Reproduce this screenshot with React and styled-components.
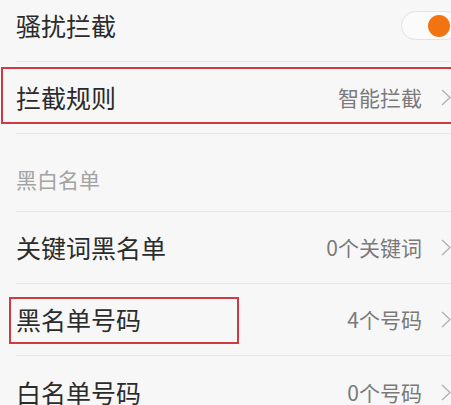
import React from "react";
import styled, { createGlobalStyle } from "styled-components";

const GlobalStyle = createGlobalStyle`
  html, body {
    margin: 0;
    padding: 0;
    background: #f7f7f7;
    overflow: hidden;
  }
  body {
    font-family: "Noto Sans CJK SC", "Noto Sans", sans-serif;
  }
`;

const Screen = styled.div`
  width: 451px;
  height: 405px;
  overflow: hidden;
  background: #f7f7f7;
`;

const List = styled.div`
  display: flex;
  flex-direction: column;
  margin-top: -10px;
`;

const Row = styled.div`
  position: relative;
  height: 72px;
  display: flex;
  align-items: center;
  justify-content: space-between;
  padding-left: 16px;
  box-sizing: border-box;
  border-bottom: ${(p) => (p.$last ? "none" : "1px solid transparent")};

  &::after {
    content: "";
    display: ${(p) => (p.$last ? "none" : "block")};
    position: absolute;
    left: 16px;
    right: 0;
    bottom: -1px;
    height: 1px;
    background: #e4e4e4;
  }
`;

const Header = styled.div`
  position: relative;
  height: 78px;
  display: flex;
  align-items: flex-end;
  padding: 0 0 17px 16px;
  box-sizing: border-box;
  font-size: 21px;
  color: #a3a3a3;
  border-bottom: 1px solid transparent;

  &::after {
    content: "";
    position: absolute;
    left: 16px;
    right: 0;
    bottom: -1px;
    height: 1px;
    background: #e4e4e4;
  }
`;

const Label = styled.span`
  font-size: 25px;
  color: #2b2b2b;
  line-height: 1;
`;

const Trail = styled.div`
  display: flex;
  align-items: center;
  gap: 19px;
`;

const Value = styled.span`
  font-size: 21px;
  color: #7a7a7a;
  line-height: 1;
`;

const Chevron = styled.svg`
  width: 10px;
  height: 17px;
  display: block;
`;

const Toggle = styled.div`
  width: 60px;
  height: 29px;
  margin-right: -10px;
  box-sizing: border-box;
  border: 1px solid #e2e2e2;
  border-radius: 15px;
  background: #fbfbfb;
  display: flex;
  align-items: center;
  padding-left: 26px;
`;

const Knob = styled.div`
  width: 22px;
  height: 22px;
  border-radius: 50%;
  background: #f27411;
`;

const Mark = styled.div`
  position: absolute;
  border: 2px solid #cf3a42;
  box-sizing: border-box;
  pointer-events: none;
  top: ${(p) => p.$top}px;
  bottom: ${(p) => p.$bottom}px;
  left: ${(p) => p.$left}px;
  width: ${(p) => p.$width};
`;

const Arrow = () => (
  <Chevron viewBox="0 0 10 17">
    <path d="M1 1 L9 8.5 L1 16" fill="none" stroke="#b0b0b0" strokeWidth="1.3" />
  </Chevron>
);

const LinkRow = ({ label, value, last, children }) => (
  <Row $last={last}>
    <Label>{label}</Label>
    <Trail>
      <Value>{value}</Value>
      <Arrow />
    </Trail>
    {children}
  </Row>
);

export default function App() {
  return (
    <Screen>
      <GlobalStyle />
      <List>
        <Row>
          <Label>骚扰拦截</Label>
          <Toggle>
            <Knob />
          </Toggle>
        </Row>
        <LinkRow label="拦截规则" value="智能拦截">
          <Mark $top={5} $bottom={9} $left={1} $width="470px" />
        </LinkRow>
        <Header>黑白名单</Header>
        <LinkRow label="关键词黑名单" value="0个关键词" />
        <LinkRow label="黑名单号码" value="4个号码">
          <Mark $top={13} $bottom={11} $left={9} $width="230px" />
        </LinkRow>
        <LinkRow label="白名单号码" value="0个号码" last />
      </List>
    </Screen>
  );
}
